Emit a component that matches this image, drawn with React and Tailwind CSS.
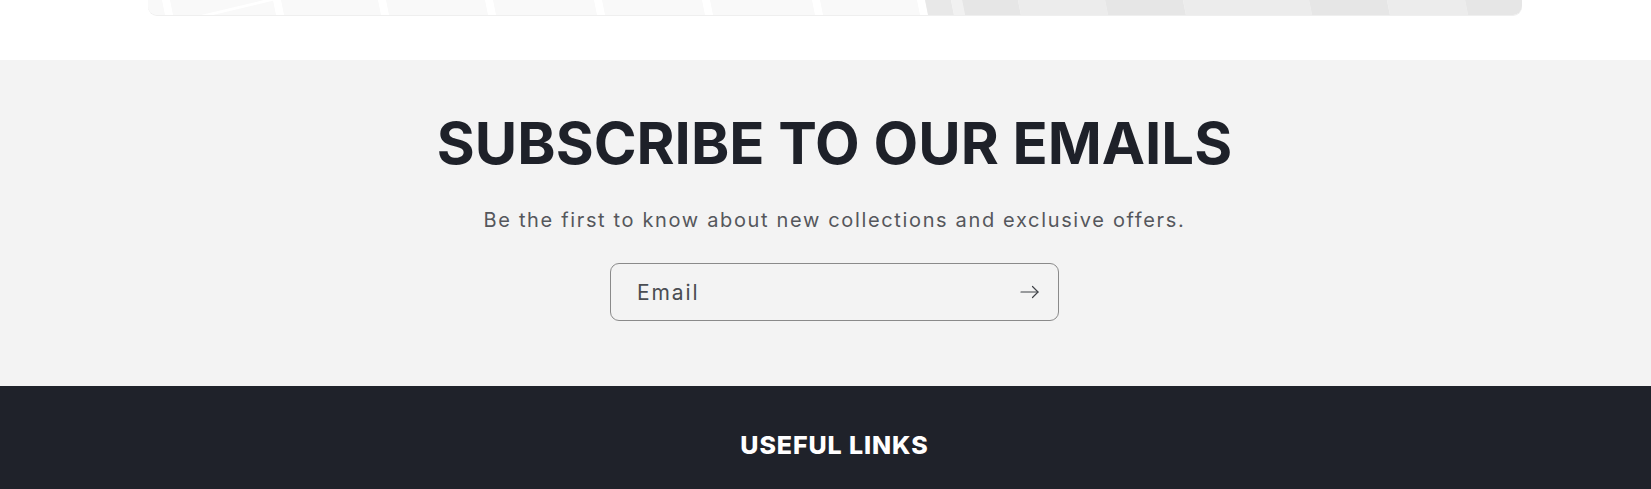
// Newsletter signup band with the tail of a banner above and the footer start below.

const LIGHT_STRIPES = [163, 274, 379, 486, 595, 703, 813, 918];
const GREY_BANDS = [
  { x: 926, w: 26, c: '#e8e8e8' },
  { x: 952, w: 11, c: '#f1f1f1' },
  { x: 963, w: 56, c: '#e6e6e6' },
  { x: 1019, w: 87, c: '#ececec' },
  { x: 1106, w: 78, c: '#e6e6e6' },
  { x: 1184, w: 126, c: '#ececec' },
  { x: 1310, w: 78, c: '#e6e6e6' },
  { x: 1388, w: 78, c: '#ececec' },
  { x: 1466, w: 60, c: '#e6e6e6' },
];

function BannerTail() {
  // banner picture, offset so x values match page coordinates
  const ox = 147;
  return (
    <div className="mx-auto w-[1374px] h-[15px] overflow-hidden rounded-b-[9px] bg-[#f9f9f9] shadow-[0_1px_0_#efefef]">
      <svg width="1374" height="15" viewBox="0 0 1374 15" className="block">
        <rect x="0" y="0" width="1374" height="15" fill="#f9f9f9" />
        {LIGHT_STRIPES.map((x) => (
          <polygon
            key={x}
            points={`${x - ox - 2},0 ${x - ox + 6},0 ${x - ox + 9},15 ${x - ox + 1},15`}
            fill="#ffffff"
          />
        ))}
        <polygon points={`${263 - ox},0 ${275 - ox},0 ${212 - ox},15 ${200 - ox},15`} fill="#ffffff" />
        {GREY_BANDS.map((b) => (
          <polygon
            key={b.x}
            points={`${b.x - ox - 2},0 ${b.x - ox + b.w - 2},0 ${b.x - ox + b.w + 1},15 ${b.x - ox + 1},15`}
            fill={b.c}
          />
        ))}
      </svg>
    </div>
  );
}

function ArrowIcon() {
  return (
    <svg width="20" height="14" viewBox="0 0 20 14" fill="none" stroke="#3f4247" strokeWidth="1.2" strokeLinecap="round" strokeLinejoin="round">
      <path d="M1 7h17" />
      <path d="M12.5 1.5L18 7l-5.5 5.5" />
    </svg>
  );
}

export default function App() {
  return (
    <div className="w-[1651px] min-h-[489px] bg-white" style={{ fontFamily: 'Inter, "Noto Sans", sans-serif' }}>
      <div className="h-[60px] bg-white pl-[18px]">
        <BannerTail />
      </div>

      <section className="bg-[#f3f3f3] pl-[18px] pt-[54px] pb-[65px] flex flex-col items-center">
        <h2 className="h-[58px] text-[58px] leading-none font-bold tracking-[0px] text-[#1e2129]">
          SUBSCRIBE TO OUR EMAILS
        </h2>
        <p className="mt-[38px] h-[20px] text-[20px] leading-none tracking-[1.65px] text-[#55575c]">
          Be the first to know about new collections and exclusive offers.
        </p>
        <div className="mt-[33px] w-[449px] h-[58px] rounded-[9px] border border-[#8a8a8a] flex items-center pl-[26px] pr-[18px]">
          <span className="flex-1 text-[21px] leading-none tracking-[1.9px] text-[#4a4d52]">Email</span>
          <ArrowIcon />
        </div>
      </section>

      <footer className="bg-[#1f222a] h-[103px] pl-[18px] pt-[47px] flex justify-center">
        <h3 className="h-[25px] text-[25px] leading-none font-extrabold tracking-[0.9px] text-white">USEFUL LINKS</h3>
      </footer>
    </div>
  );
}
